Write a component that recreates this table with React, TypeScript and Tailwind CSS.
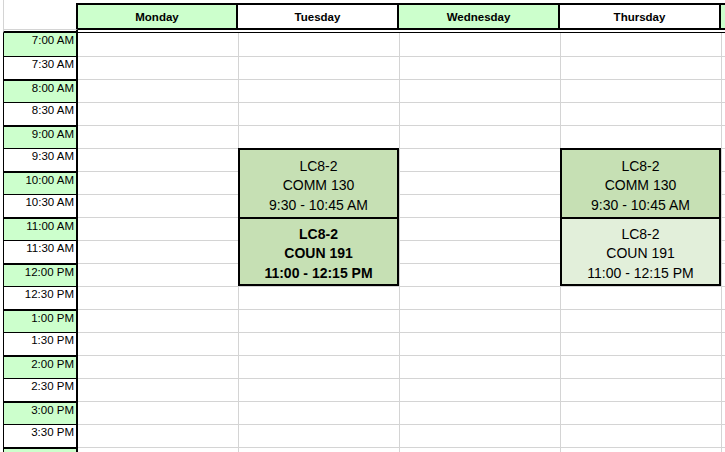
import React from "react";

const times = [
  "7:00 AM", "7:30 AM", "8:00 AM", "8:30 AM", "9:00 AM", "9:30 AM", "10:00 AM",
  "10:30 AM", "11:00 AM", "11:30 AM", "12:00 PM", "12:30 PM", "1:00 PM", "1:30 PM",
  "2:00 PM", "2:30 PM", "3:00 PM", "3:30 PM", "4:00 PM",
];

const days = ["Monday", "Tuesday", "Wednesday", "Thursday", "Friday"];

type Ev = { day: number; start: number; lines: string[]; kind: "top" | "bold" | "light" };

const events: Ev[] = [
  { day: 1, start: 5, lines: ["LC8-2", "COMM 130", "9:30 - 10:45 AM"], kind: "top" },
  { day: 1, start: 8, lines: ["LC8-2", "COUN 191", "11:00 - 12:15 PM"], kind: "bold" },
  { day: 3, start: 5, lines: ["LC8-2", "COMM 130", "9:30 - 10:45 AM"], kind: "top" },
  { day: 3, start: 8, lines: ["LC8-2", "COUN 191", "11:00 - 12:15 PM"], kind: "light" },
];

function EventCell({ ev }: { ev: Ev }) {
  const cls =
    ev.kind === "top"
      ? "border-2 border-b-0 pb-[2px] bg-[#c6e0b4]"
      : ev.kind === "bold"
      ? "border-2 pb-[1px] bg-[#c6e0b4] font-bold"
      : "border-2 pb-[1px] bg-[#e2efda]";
  return (
    <div className={`row-span-3 flex flex-col items-center justify-end border-black text-[14px] leading-[19.5px] ${cls}`}>
      {ev.lines.map((l) => (
        <div key={l}>{l}</div>
      ))}
    </div>
  );
}

export default function App() {
  return (
    <div className="w-[725px] h-[452px] overflow-hidden bg-white text-black font-['Liberation_Sans',Arial,sans-serif]">
      <div className="grid w-max grid-cols-[3px_75px_160px_161px_161px_161px_161px] grid-rows-[3px_27px_3px_repeat(19,23px)]">
        {/* top strip */}
        <div />
        <div className="border-l border-[#d4d4d4]" />
        <div className="col-span-5" />

        {/* header */}
        <div />
        <div className="border-l border-b border-[#d4d4d4] border-r-2 border-r-black" />
        {days.map((d, i) => (
          <div
            key={d}
            className={`flex items-center justify-center border-y-2 border-r-2 border-black text-[11.5px] leading-[14px] font-bold ${
              i % 2 === 0 ? "bg-[#ccffcc]" : "bg-white"
            }`}
          >
            {d}
          </div>
        ))}

        {/* gap row */}
        <div />
        <div className="border-l border-l-[#d4d4d4] border-r-2 border-b-2 border-black" />
        {days.map((d) => (
          <div key={d} className="border-b border-black" />
        ))}

        {/* time rows */}
        {times.map((t, r) => {
          const hour = r % 2 === 0;
          const timeCls =
            r === 0
              ? "bg-[#ccffcc]"
              : hour
              ? "bg-[#ccffcc] border-t-2"
              : "bg-white border-t";
          return (
            <React.Fragment key={t}>
              <div />
              <div className={`border-l border-r-2 border-black pr-[2px] text-right text-[11.5px] leading-[14px] ${timeCls}`}>
                {t}
              </div>
              {days.map((d, i) => {
                const ev = events.find((e) => e.day === i && e.start === r);
                if (ev) return <EventCell key={d} ev={ev} />;
                const covered = events.some((e) => e.day === i && r > e.start && r < e.start + 3);
                if (covered) return null;
                return (
                  <div
                    key={d}
                    className={`border-[#d4d4d4] ${i > 0 ? "border-l" : ""} ${r > 0 ? "border-t" : ""}`}
                  />
                );
              })}
            </React.Fragment>
          );
        })}
      </div>
    </div>
  );
}
